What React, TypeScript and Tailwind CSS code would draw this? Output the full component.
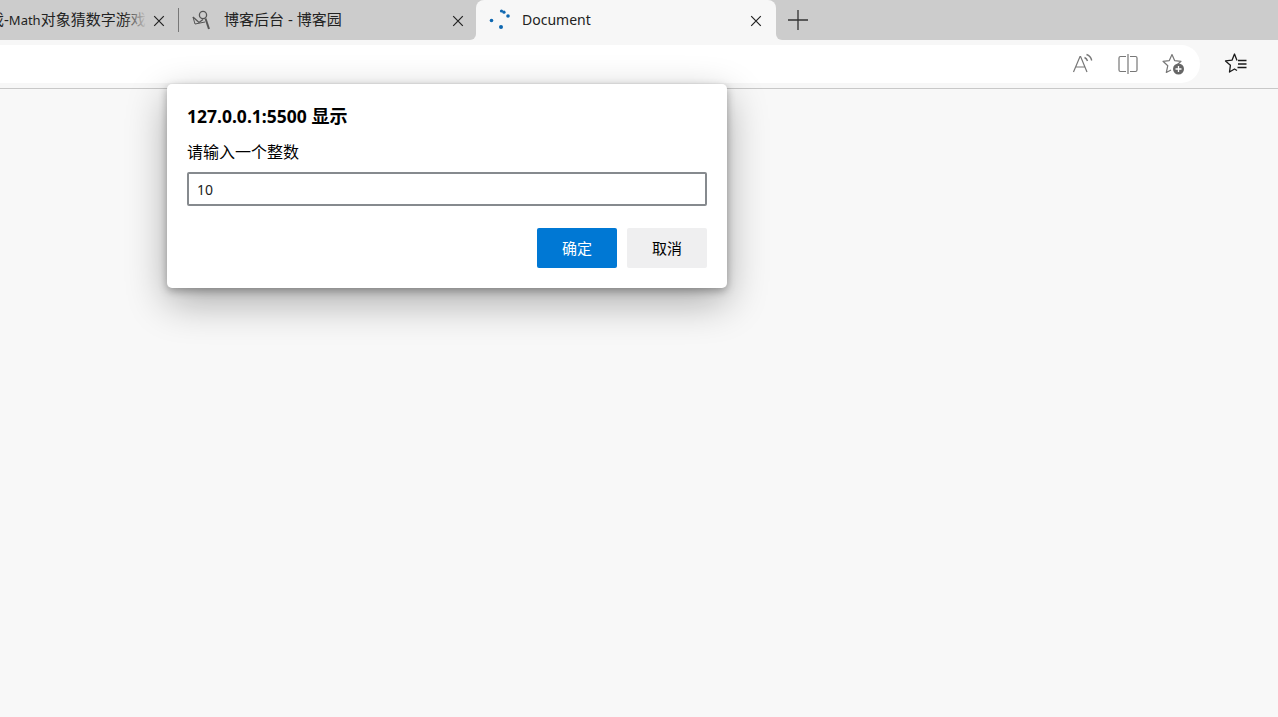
const FONT = "font-['Noto_Sans','Noto_Sans_CJK_SC',sans-serif]";

function CloseIcon() {
  return (
    <svg className="mt-[2px] shrink-0" width="12" height="12" viewBox="0 0 12 12" fill="none" stroke="#222" strokeWidth="1.2" aria-hidden>
      <path d="M1.2 1.2 10.8 10.8M10.8 1.2 1.2 10.8" />
    </svg>
  );
}

function NewTabIcon() {
  return (
    <svg width="22" height="22" viewBox="0 0 22 22" fill="none" stroke="#333" strokeWidth="1.3" aria-hidden>
      <path d="M11 1v20M1 11h20" />
    </svg>
  );
}

function CnblogsIcon() {
  return (
    <svg className="shrink-0" width="20" height="20" viewBox="0 0 20 20" fill="none" stroke="#555" strokeWidth="1.3" aria-hidden>
      <path d="M2 7 8 12.5 12 9.5" />
      <path d="M2 7 4 14 14 12" strokeWidth="1" />
      <circle cx="12" cy="5" r="3.6" />
      <path d="M14.5 8.5 18 19" strokeWidth="2" />
    </svg>
  );
}

function LoadingDots() {
  return (
    <svg className="shrink-0" width="24" height="24" viewBox="0 0 24 24" fill="#0e67b0" aria-hidden>
      <circle cx="3.5" cy="12.5" r="1.8" />
      <circle cx="13.5" cy="3" r="1.6" />
      <circle cx="16" cy="4.2" r="1.6" />
      <circle cx="20" cy="8" r="1.8" />
      <circle cx="13" cy="19" r="2" />
    </svg>
  );
}

function ReadAloudIcon() {
  return (
    <svg width="22" height="22" viewBox="0 0 22 22" fill="none" stroke="#777" strokeWidth="1.2" aria-hidden>
      <path d="M1.5 19 8 3.5h.6L15 19M3.8 14h9" />
      <path d="M12.5 4.5c1.5.7 2.5 1.8 3 3.5" strokeWidth="1.4" />
      <path d="M14.5 1.5c2.6.9 4.6 3 5.2 6" strokeWidth="1.4" />
    </svg>
  );
}

function SplitIcon() {
  return (
    <svg width="24" height="24" viewBox="0 0 24 24" fill="none" stroke="#777" strokeWidth="1.2" aria-hidden>
      <path d="M10 4.5H4.5A1.5 1.5 0 0 0 3 6v12a1.5 1.5 0 0 0 1.5 1.5H10M14 4.5h5.5A1.5 1.5 0 0 1 21 6v12a1.5 1.5 0 0 1-1.5 1.5H14" />
      <path d="M12 2v20" />
    </svg>
  );
}

function AddFavoriteIcon() {
  return (
    <svg width="24" height="24" viewBox="0 0 24 24" fill="none" aria-hidden>
      <path
        d="M16.5 12.5 20 9.3 13.6 8.6 11 2.5 8.3 8.6 2 9.3 6.8 13.7 5.3 20.5 10 18"
        stroke="#777"
        strokeWidth="1.2"
        strokeLinejoin="round"
      />
      <circle cx="17.5" cy="17" r="5.5" fill="#666" />
      <path d="M17.5 14v6M14.5 17h6" stroke="#fff" strokeWidth="1.3" />
    </svg>
  );
}

function FavoritesIcon() {
  return (
    <svg width="24" height="24" viewBox="0 0 24 24" fill="none" stroke="#1a1a1a" strokeWidth="1.3" aria-hidden>
      <path d="M13 8.4 10.5 2 8 8.2 1.5 8.9 6.4 13.3 5.5 20 10.5 17 13 18.5" strokeLinejoin="round" />
      <path d="M14 8.5h8.5M14 12h8.5M13.5 15.5h9" />
    </svg>
  );
}

function TabBar() {
  return (
    <div className="flex h-10 items-stretch bg-[#cccccc] text-[15px] text-[#222]">
      <div className="flex w-[178px] shrink-0 items-center overflow-hidden pr-[13px]">
        <div className="relative mr-[6px] w-[147px] shrink-0 overflow-hidden whitespace-nowrap pb-px">
          <span className="-ml-[11px] block">
            戏-<span className="text-[13px]">Math</span>对象猜数字游戏
          </span>
          <span className="absolute inset-y-0 right-0 w-6 bg-gradient-to-r from-transparent to-[#cccccc]" />
        </div>
        <CloseIcon />
      </div>
      <div className="my-2 w-px shrink-0 bg-[#777]" />
      <div className="flex w-[296px] shrink-0 items-center pl-3 pr-[11px]">
        <CnblogsIcon />
        <span className="ml-[13px] flex-1 whitespace-nowrap pb-px">博客后台 - 博客园</span>
        <CloseIcon />
      </div>
      <div className="relative ml-px flex w-[300px] shrink-0 items-center rounded-t-lg bg-[#f7f7f7] pl-[12px] pr-[14px]">
        {/* concave corners where the active tab flares into the toolbar */}
        <span className="absolute -left-[6px] bottom-0 h-[6px] w-[6px] bg-[#f7f7f7]">
          <span className="block h-full w-full rounded-br-[6px] bg-[#cccccc]" />
        </span>
        <span className="absolute -right-[6px] bottom-0 h-[6px] w-[6px] bg-[#f7f7f7]">
          <span className="block h-full w-full rounded-bl-[6px] bg-[#cccccc]" />
        </span>
        <LoadingDots />
        <span className="ml-[10px] flex-1 whitespace-nowrap pb-[2px] text-[14px]">Document</span>
        <CloseIcon />
      </div>
      <div className="flex w-11 items-center justify-center">
        <NewTabIcon />
      </div>
    </div>
  );
}

function ToolbarButton({ children }: { children: React.ReactNode }) {
  return <div className="flex h-full w-[45px] items-center justify-center">{children}</div>;
}

function Toolbar() {
  return (
    <div className="flex h-[49px] items-start border-b border-[#c8c8c8] bg-[#f7f7f7] pt-[5px]">
      <div className="flex h-[38px] w-[1200px] items-center justify-end rounded-r-[19px] bg-white pr-[5px]">
        <ToolbarButton>
          <ReadAloudIcon />
        </ToolbarButton>
        <ToolbarButton>
          <SplitIcon />
        </ToolbarButton>
        <ToolbarButton>
          <AddFavoriteIcon />
        </ToolbarButton>
      </div>
      <div className="ml-6 flex h-[38px] items-center">
        <FavoritesIcon />
      </div>
    </div>
  );
}

function PromptDialog() {
  return (
    <div className="absolute left-[167px] top-[84px] w-[560px] rounded-[5px] bg-white px-5 pb-5 pt-5 shadow-[0_14px_40px_rgba(0,0,0,0.32),0_3px_8px_rgba(0,0,0,0.3)]">
      <h2 className="text-[18px] leading-6 font-bold text-black">
        <span className="text-[17.5px]">127.0.0.1:5500</span> 显示
      </h2>
      <p className="mt-3 text-[16px] leading-6 text-black">请输入一个整数</p>
      <div className="mt-2 flex h-[34px] items-center rounded-[2px] border-2 border-[#868a8e] bg-white px-2 text-[14px] text-[#222]">
        10
      </div>
      <div className="mt-[22px] flex justify-end gap-[10px]">
        <button type="button" className="h-10 w-20 rounded-[2px] bg-[#0078d4] text-[15px] text-white">
          确定
        </button>
        <button type="button" className="h-10 w-20 rounded-[2px] bg-[#efeff0] text-[15px] text-black">
          取消
        </button>
      </div>
    </div>
  );
}

export default function App() {
  return (
    <div className={`relative flex h-[717px] w-[1278px] flex-col overflow-hidden bg-[#f8f8f8] ${FONT}`}>
      <TabBar />
      <Toolbar />
      <div className="flex-1" />
      <PromptDialog />
    </div>
  );
}
